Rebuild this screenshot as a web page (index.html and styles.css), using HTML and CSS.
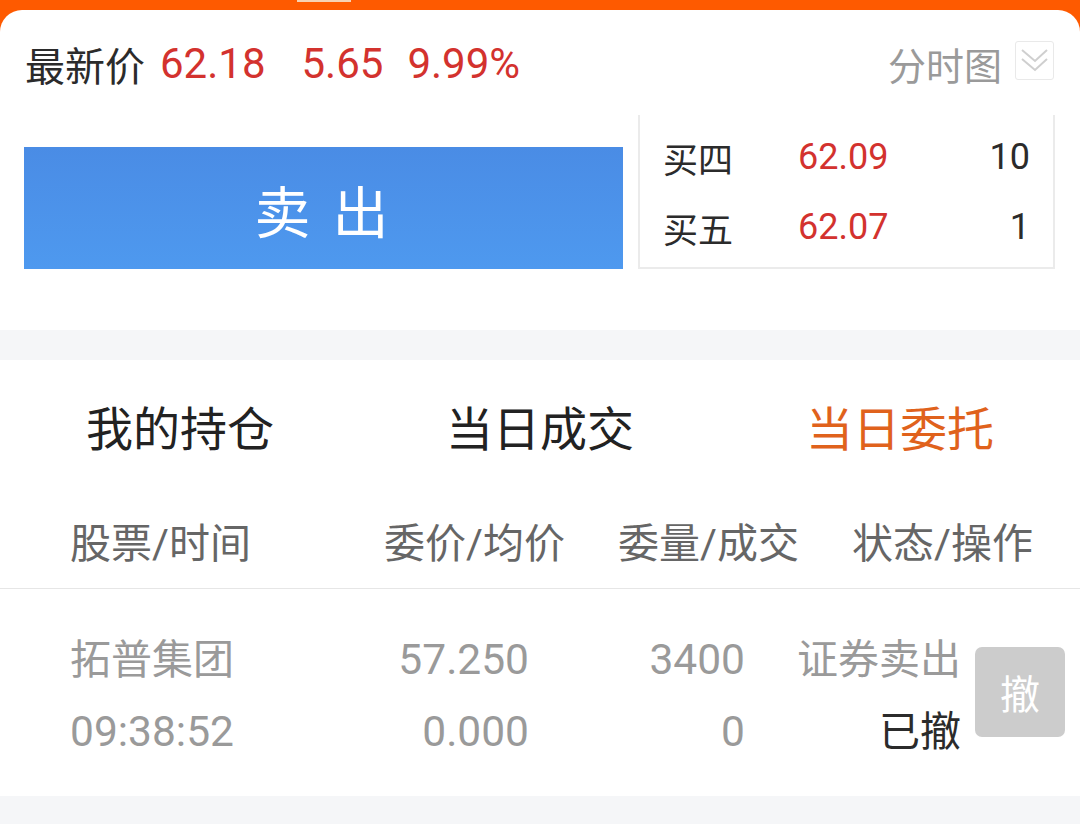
FILE: index.html
```html
<!DOCTYPE html>
<html lang="zh-CN">
<head>
    <meta charset="UTF-8">
    <meta name="viewport" content="width=device-width, initial-scale=1.0">
    <title>卖出 - 当日委托</title>
    <link rel="stylesheet" href="styles.css">
</head>
<body>
    <div class="app">
        <div class="top-bar">
            <span class="top-mark"></span>
        </div>

        <!-- quote + sell -->
        <section class="trade-panel">
            <div class="quote-row">
                <div class="quote-main">
                    <span class="quote-label">最新价</span>
                    <span class="quote-num quote-price">62.18</span>
                    <span class="quote-num quote-change">5.65</span>
                    <span class="quote-num quote-pct">9.99%</span>
                </div>
                <div class="chart-toggle">
                    <span class="chart-label">分时图</span>
                    <span class="chart-icon">
                        <svg width="39" height="41" viewBox="0 0 39 41" fill="none" stroke="#cfcfcf" stroke-width="2">
                            <polyline points="7,9 20,20 32,9"/>
                            <polyline points="7,18 20,29 32,18"/>
                        </svg>
                    </span>
                </div>
            </div>

            <div class="trade-row">
                <button class="sell-button">卖 出</button>
                <div class="book">
                    <div class="book-row">
                        <span class="book-label">买四</span>
                        <span class="book-price">62.09</span>
                        <span class="book-qty">10</span>
                    </div>
                    <div class="book-row">
                        <span class="book-label">买五</span>
                        <span class="book-price">62.07</span>
                        <span class="book-qty">1</span>
                    </div>
                </div>
            </div>
        </section>

        <!-- orders -->
        <section class="orders">
            <div class="tabs">
                <div class="tab">我的持仓</div>
                <div class="tab">当日成交</div>
                <div class="tab active">当日委托</div>
            </div>

            <div class="order-head">
                <span>股票/时间</span>
                <span>委价/均价</span>
                <span>委量/成交</span>
                <span>状态/操作</span>
            </div>

            <div class="order-row">
                <div class="cell">
                    <span>拓普集团</span>
                    <span class="digits">09:38:52</span>
                </div>
                <div class="cell num">
                    <span class="digits">57.250</span>
                    <span class="digits">0.000</span>
                </div>
                <div class="cell num">
                    <span class="digits">3400</span>
                    <span class="digits">0</span>
                </div>
                <div class="cell num">
                    <span>证券卖出</span>
                    <span class="status">已撤</span>
                </div>
                <button class="cancel-button">撤</button>
            </div>
        </section>
    </div>
</body>
</html>
```

FILE: styles.css
```css
:root {
    --orange: #fe5a00;
    --red: #d3322e;
    --blue-top: #4a8ce5;
    --blue-bottom: #4e99ef;
    --tab-active: #e0621c;
    --gray-bg: #f5f6f8;
    --line: #ebebeb;
    --text-dark: #2b2b2b;
    --text-mid: #666666;
    --text-light: #9a9a9a;
}

* {
    box-sizing: border-box;
    margin: 0;
    padding: 0;
}

body {
    font-family: Roboto, "Noto Sans CJK SC", sans-serif;
    color: var(--text-dark);
    background-color: var(--gray-bg);
    width: 1080px;
    height: 824px;
    overflow: hidden;
}

.app {
    background: linear-gradient(var(--orange) 0, var(--orange) 40px, var(--gray-bg) 40px);
    min-height: 824px;
}

.top-bar {
    height: 10px;
    display: flex;
}

.top-mark {
    width: 54px;
    height: 2px;
    margin-left: 297px;
    background-color: #f6d2b4;
}

.trade-panel {
    background-color: white;
    border-radius: 22px 22px 0 0;
    height: 320px;
}

.quote-row {
    height: 105px;
    padding: 2px 26px 0 25px;
    display: flex;
    justify-content: space-between;
    align-items: center;
}

.quote-main {
    display: flex;
    align-items: center;
}

.quote-label {
    font-size: 40px;
    color: var(--text-dark);
}

.quote-num {
    font-size: 42px;
    color: var(--red);
}

.quote-price {
    margin-left: 15px;
}

.quote-change {
    margin-left: 36px;
}

.quote-pct {
    margin-left: 24px;
}

.chart-toggle {
    display: flex;
    align-items: center;
    gap: 13px;
}

.chart-label {
    font-size: 38px;
    color: var(--text-light);
}

.chart-icon {
    width: 39px;
    height: 39px;
    border: 1px solid #e9e9e9;
    border-radius: 3px;
    display: flex;
    margin-top: -6px;
}

.chart-icon svg {
    margin: -1px;
}

.trade-row {
    height: 154px;
    padding: 0 25px 0 24px;
    display: flex;
    gap: 15px;
}

.sell-button {
    align-self: flex-end;
    width: 599px;
    height: 122px;
    border: none;
    background: linear-gradient(var(--blue-top), var(--blue-bottom));
    color: white;
    font-family: Roboto, "Noto Sans CJK SC", sans-serif;
    font-size: 56px;
    letter-spacing: 4px;
}

.book {
    flex: 1;
    border: 2px solid var(--line);
    border-top: none;
    padding: 7px 23px 0 23px;
}

.book-row {
    height: 70px;
    display: grid;
    grid-template-columns: 135px 1fr auto;
    align-items: center;
    font-size: 35px;
}

.book-price,
.book-qty {
    font-size: 36px;
}

.book-price {
    color: var(--red);
}

.orders {
    margin-top: 30px;
    background-color: white;
    height: 436px;
}

.tabs {
    height: 136px;
    padding-bottom: 6px;
    display: grid;
    grid-template-columns: repeat(3, 1fr);
    align-items: center;
}

.tab {
    text-align: center;
    font-size: 47px;
    color: #222222;
}

.tab.active {
    color: var(--tab-active);
}

.order-head {
    height: 93px;
    padding: 0 46px 4px 70px;
    display: grid;
    grid-template-columns: 1fr 182px 182px 182px;
    column-gap: 52px;
    align-items: center;
    border-bottom: 1px solid #e6e6e6;
    font-size: 41px;
    color: var(--text-mid);
}

.order-head span {
    white-space: nowrap;
}

.order-row {
    padding: 35px 15px 28px 70px;
    display: grid;
    grid-template-columns: 1fr 217px 216px 216px 104px;
    align-items: center;
    font-size: 41px;
    color: var(--text-light);
}

.cell {
    display: flex;
    flex-direction: column;
    line-height: 72px;
    white-space: nowrap;
}

.cell.num {
    align-items: flex-end;
}

.digits {
    font-size: 42.5px;
}

.status {
    color: var(--text-dark);
}

.cancel-button {
    justify-self: end;
    width: 90px;
    height: 90px;
    margin-bottom: 8px;
    border: none;
    border-radius: 7px;
    background-color: #cccccc;
    color: white;
    font-family: Roboto, "Noto Sans CJK SC", sans-serif;
    font-size: 40px;
}
```
